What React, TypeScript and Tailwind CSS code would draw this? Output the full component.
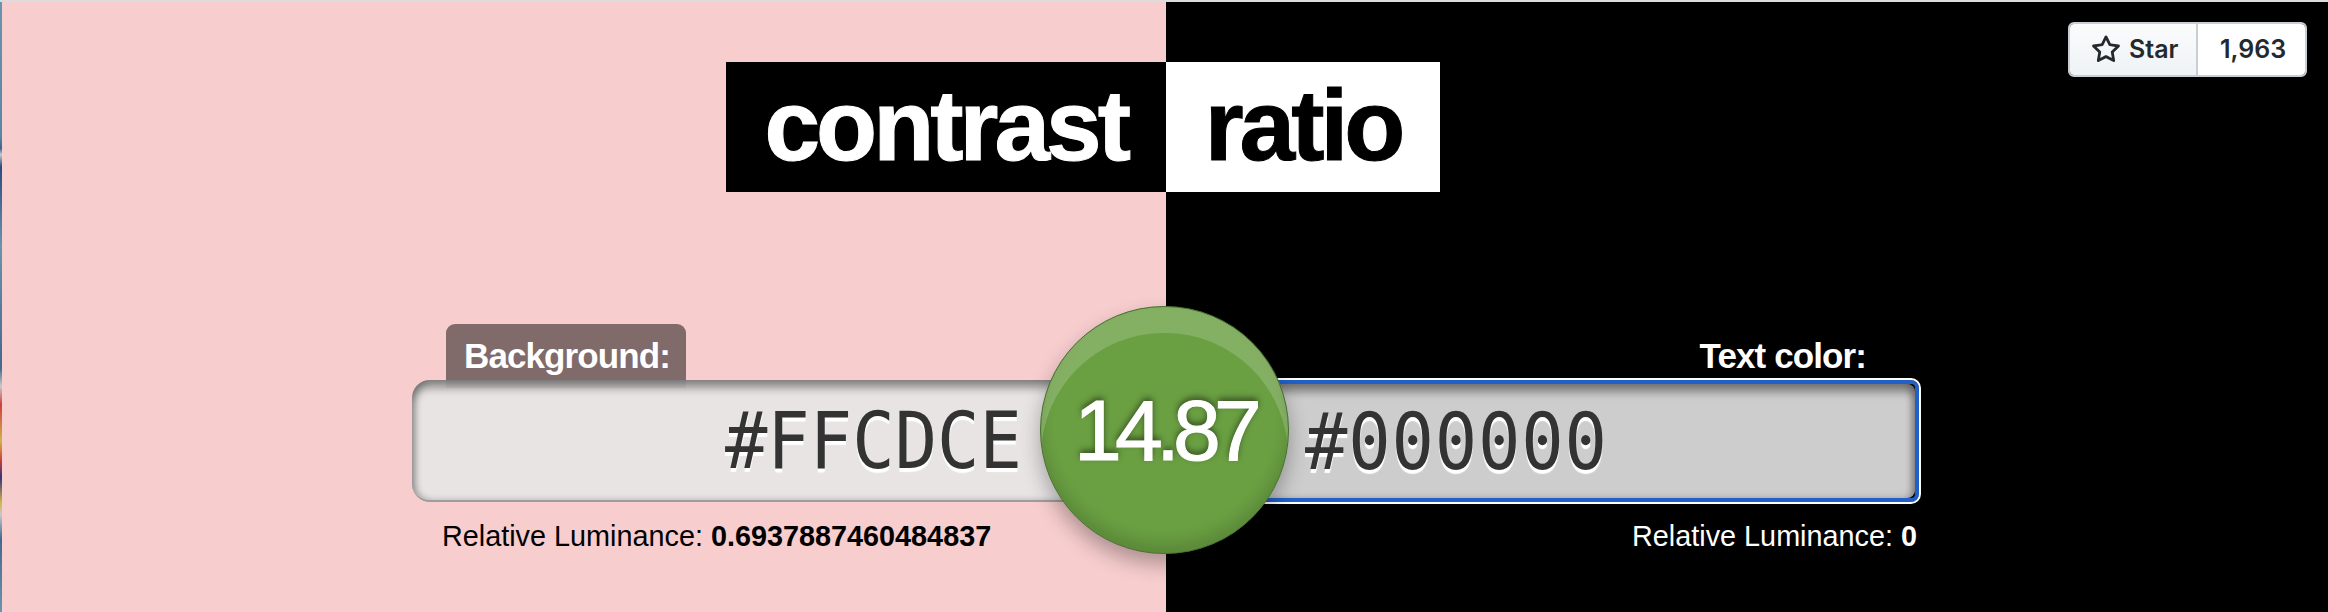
const sans = "font-['Liberation_Sans',Arial,sans-serif]"

const App = () => {
    return (
        <div className={`flex flex-col h-[612px] w-[2328px] overflow-hidden bg-black ${sans}`}>
            <div className="h-[2px] bg-[#dcdcdc]"></div>
            <div className="relative flex flex-1">
                {/* Desktop peeking in on the left edge */}
                <div className="w-[2px] bg-[linear-gradient(180deg,#6a93ad_0%,#5a86a6_22%,#3d6390_24%,#c8c8c8_25%,#2c4a80_27%,#6a93ad_40%,#45688f_60%,#c8c8c8_63%,#c9433b_66%,#d0b44a_72%,#c9433b_75%,#34347a_78%,#d0b44a_82%,#c8c8c8_84%,#45688f_88%,#6a93ad_100%)]"></div>

                {/* Background half */}
                <div className="flex flex-col items-end w-[1164px] bg-[#f7cdce]">
                    <h1 className="flex items-center justify-end w-[440px] h-[130px] mt-[60px] pr-[39px] pb-[5px] bg-black text-white text-[100px] font-bold tracking-[-0.04em] [-webkit-text-stroke:1px_white]">
                        contrast
                    </h1>
                    <div className="flex flex-col w-[754px] mt-[132px]">
                        <label className="relative w-[240px] h-[64px] ml-[34px] -mb-[8px] pt-[10px] pl-[18px] rounded-t-[9px] bg-[#806a6a] text-white text-[35px] tracking-[-0.9px] leading-[44px] font-bold">
                            Background:
                        </label>
                        <div className="relative flex items-center justify-end h-[122px] w-full pr-[144px] pt-[6px] rounded-[18px] bg-[rgba(230,230,230,0.89)] border-b-2 border-[#a09c9c] shadow-[inset_0_8px_9px_rgba(0,0,0,0.38),inset_4px_0_6px_rgba(0,0,0,0.22)] text-[#333] [text-shadow:0_3px_1px_white] text-[70.5px] font-['DejaVu_Sans_Mono',monospace]">
                            <span className="inline-block scale-y-[1.1]">#FFCDCE</span>
                        </div>
                        <p className="mt-[16px] pl-[30px] text-black text-[28.8px] leading-[36px]">
                            Relative Luminance: <strong>0.6937887460484837</strong>
                        </p>
                    </div>
                </div>

                {/* Text color half */}
                <div className="flex flex-col flex-1 bg-black">
                    <h1 className="flex items-center justify-center w-[274px] h-[130px] mt-[60px] pb-[5px] bg-white text-black text-[100px] font-bold tracking-[-0.04em] [-webkit-text-stroke:1px_black]">
                        ratio
                    </h1>
                    <div className="flex flex-col w-[753px] mt-[132px]">
                        <label className="h-[56px] pt-[10px] pr-[53px] text-right text-white text-[35px] tracking-[-0.9px] leading-[44px] font-bold">
                            Text color:
                        </label>
                        <div className="h-[122px] border-[4px] border-[#2060c8] outline-2 outline-white rounded-[8px] bg-black">
                            <div className="flex items-center h-full w-full pl-[135px] pt-[6px] rounded-[8px] bg-[#cdcdcd] shadow-[inset_0_8px_9px_rgba(0,0,0,0.38),inset_-4px_0_6px_rgba(0,0,0,0.22)] text-[#333] [text-shadow:0_3px_1px_white] text-[70.5px] tracking-[0.8px] font-['DejaVu_Sans_Mono',monospace]">
                                <span className="inline-block scale-y-[1.1]">#000000</span>
                            </div>
                        </div>
                        <p className="mt-[16px] pr-[2px] text-right text-white text-[28.8px] leading-[36px]">
                            Relative Luminance: <strong>0</strong>
                        </p>
                    </div>
                </div>

                {/* Ratio badge */}
                <div className="absolute left-[1040px] top-[304px] flex items-center justify-center w-[249px] h-[248px] rounded-full bg-[#6a9f42] border-[1.5px] border-[#4a7030] shadow-[inset_0_26px_0_rgba(255,255,255,0.18),inset_0_-10px_14px_rgba(0,0,0,0.14),0_10px_20px_rgba(0,0,0,0.3)] text-white text-[86px] tracking-[-0.08em] [-webkit-text-stroke:1px_white] [text-shadow:0_-3px_6px_rgba(0,0,0,0.55)]">
                    14.87
                </div>

                {/* GitHub star button */}
                <div className="absolute left-[2068px] top-[20px] flex h-[55px] w-[239px] rounded-[6px] border-2 border-[#c9ced4] font-['Inter',sans-serif] text-[25px] font-semibold text-[#24292e] overflow-hidden">
                    <div className="flex items-center gap-[8px] w-[128px] pl-[21px] border-r-2 border-[#c9ced4] bg-[linear-gradient(180deg,#fafbfc,#eff3f6)]">
                        <svg viewBox="0 0 16 16" className="w-[30px] h-[30px] fill-[#24292e]">
                            <path d="M8 .25a.75.75 0 0 1 .673.418l1.882 3.815 4.21.612a.75.75 0 0 1 .416 1.279l-3.046 2.97.719 4.192a.751.751 0 0 1-1.088.791L8 12.347l-3.766 1.98a.75.75 0 0 1-1.088-.79l.72-4.194L.818 6.374a.75.75 0 0 1 .416-1.28l4.21-.611L7.327.668A.75.75 0 0 1 8 .25Zm0 2.445L6.615 5.5a.75.75 0 0 1-.564.41l-3.097.45 2.24 2.184a.75.75 0 0 1 .216.664l-.528 3.084 2.769-1.456a.75.75 0 0 1 .698 0l2.77 1.456-.53-3.084a.75.75 0 0 1 .216-.664l2.24-2.183-3.096-.45a.75.75 0 0 1-.564-.41L8 2.694Z" />
                        </svg>
                        Star
                    </div>
                    <div className="flex flex-1 items-center justify-center pl-[3px] bg-white">1,963</div>
                </div>
            </div>
        </div>
    )
}

export default App
